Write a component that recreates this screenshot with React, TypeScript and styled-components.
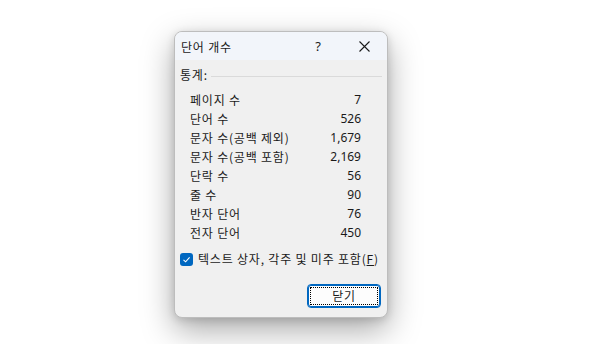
import React from "react";
import styled, { createGlobalStyle } from "styled-components";

const Global = createGlobalStyle`
  html, body { margin: 0; padding: 0; background: #ffffff; }
  body { font-family: "Noto Sans CJK KR", "Noto Sans", sans-serif; color: #1a1a1a; min-height: 100vh; }
`;

const Page = styled.div`
  min-height: 344px;
  box-sizing: border-box;
  padding: 31px 0 0 174px;
`;

const Dialog = styled.div`
  width: 212px;
  height: 285px;
  border: 1px solid #bdbdbd;
  border-radius: 8px;
  background: #f0f0f0;
  box-shadow: 0 12px 32px rgba(0, 0, 0, 0.34), 0 2px 8px rgba(0, 0, 0, 0.14);
  overflow: hidden;
  display: flex;
  flex-direction: column;
`;

const TitleBar = styled.div`
  height: 28px;
  background: #f2f5fa;
  display: flex;
  align-items: center;
  padding-left: 6px;
`;

const Title = styled.div`
  flex: 1;
  font-size: 12px;
  line-height: 16px;
  letter-spacing: 0.8px;
  padding-top: 1px;
`;

const TitleButton = styled.div<{ $w: number }>`
  width: ${(p) => p.$w}px;
  height: 28px;
  display: flex;
  align-items: center;
  justify-content: center;
  font-family: "Noto Sans", sans-serif;
  font-size: 13px;
`;

const Content = styled.div`
  flex: 1;
  display: flex;
  flex-direction: column;
  padding: 7px 5px 9px 5px;
`;

const GroupHeader = styled.div`
  display: flex;
  align-items: center;
  gap: 3px;
  font-size: 12px;
  line-height: 16px;
  letter-spacing: 0.8px;
`;

const GroupLine = styled.div`
  flex: 1;
  height: 1px;
  background: #dadada;
  margin-top: 2px;
`;

const Stats = styled.div`
  display: flex;
  flex-direction: column;
  padding: 7px 21px 0 10px;
`;

const Row = styled.div`
  display: flex;
  justify-content: space-between;
  font-size: 12px;
  line-height: 19px;
  letter-spacing: 0.8px;
`;

const Num = styled.span`
  font-family: "Noto Sans", sans-serif;
  letter-spacing: 0;
`;

const CheckRow = styled.label`
  display: flex;
  align-items: center;
  gap: 5px;
  margin-top: 9px;
  font-size: 12px;
  line-height: 16px;
  letter-spacing: 0.8px;
  white-space: nowrap;
`;

const Box = styled.span`
  width: 13px;
  height: 13px;
  flex: none;
  border-radius: 3px;
  background: #0067c0;
  display: flex;
  align-items: center;
  justify-content: center;
`;

const Footer = styled.div`
  margin-top: auto;
  display: flex;
  justify-content: flex-end;
  padding-right: 1px;
`;

const Button = styled.button`
  width: 74px;
  height: 24px;
  border: 1px solid #0067c0;
  border-radius: 4px;
  background: #fdfdfd;
  padding: 2px;
  box-shadow: inset 0 0 0 1px #0067c0;
  font-family: "Noto Sans CJK KR", sans-serif;
  font-size: 12px;
  letter-spacing: 0.8px;
  color: #1a1a1a;
  display: flex;
`;

const Focus = styled.span`
  flex: 1;
  border: 1px dotted #000;
  display: flex;
  align-items: center;
  justify-content: center;
  line-height: 14px;
`;

const stats: [string, string][] = [
  ["페이지 수", "7"],
  ["단어 수", "526"],
  ["문자 수(공백 제외)", "1,679"],
  ["문자 수(공백 포함)", "2,169"],
  ["단락 수", "56"],
  ["줄 수", "90"],
  ["반자 단어", "76"],
  ["전자 단어", "450"],
];

export default function App() {
  return (
    <>
      <Global />
      <Page>
        <Dialog>
          <TitleBar>
            <Title>단어 개수</Title>
            <TitleButton $w={46}>?</TitleButton>
            <TitleButton $w={46}>
              <svg width="11" height="11" viewBox="0 0 11 11">
                <path d="M0.5 0.5 L10.5 10.5 M10.5 0.5 L0.5 10.5" stroke="#1a1a1a" strokeWidth="1.1" />
              </svg>
            </TitleButton>
          </TitleBar>
          <Content>
            <GroupHeader>
              통계:
              <GroupLine />
            </GroupHeader>
            <Stats>
              {stats.map(([k, v]) => (
                <Row key={k}>
                  <span>{k}</span>
                  <Num>{v}</Num>
                </Row>
              ))}
            </Stats>
            <CheckRow>
              <Box>
                <svg width="9" height="9" viewBox="0 0 9 9">
                  <path d="M1.5 4.8 L3.6 6.8 L7.6 2.3" stroke="#fff" strokeWidth="1.1" fill="none" />
                </svg>
              </Box>
              <span>
                텍스트 상자, 각주 및 미주 포함(<u>F</u>)
              </span>
            </CheckRow>
            <Footer>
              <Button>
                <Focus>닫기</Focus>
              </Button>
            </Footer>
          </Content>
        </Dialog>
      </Page>
    </>
  );
}
